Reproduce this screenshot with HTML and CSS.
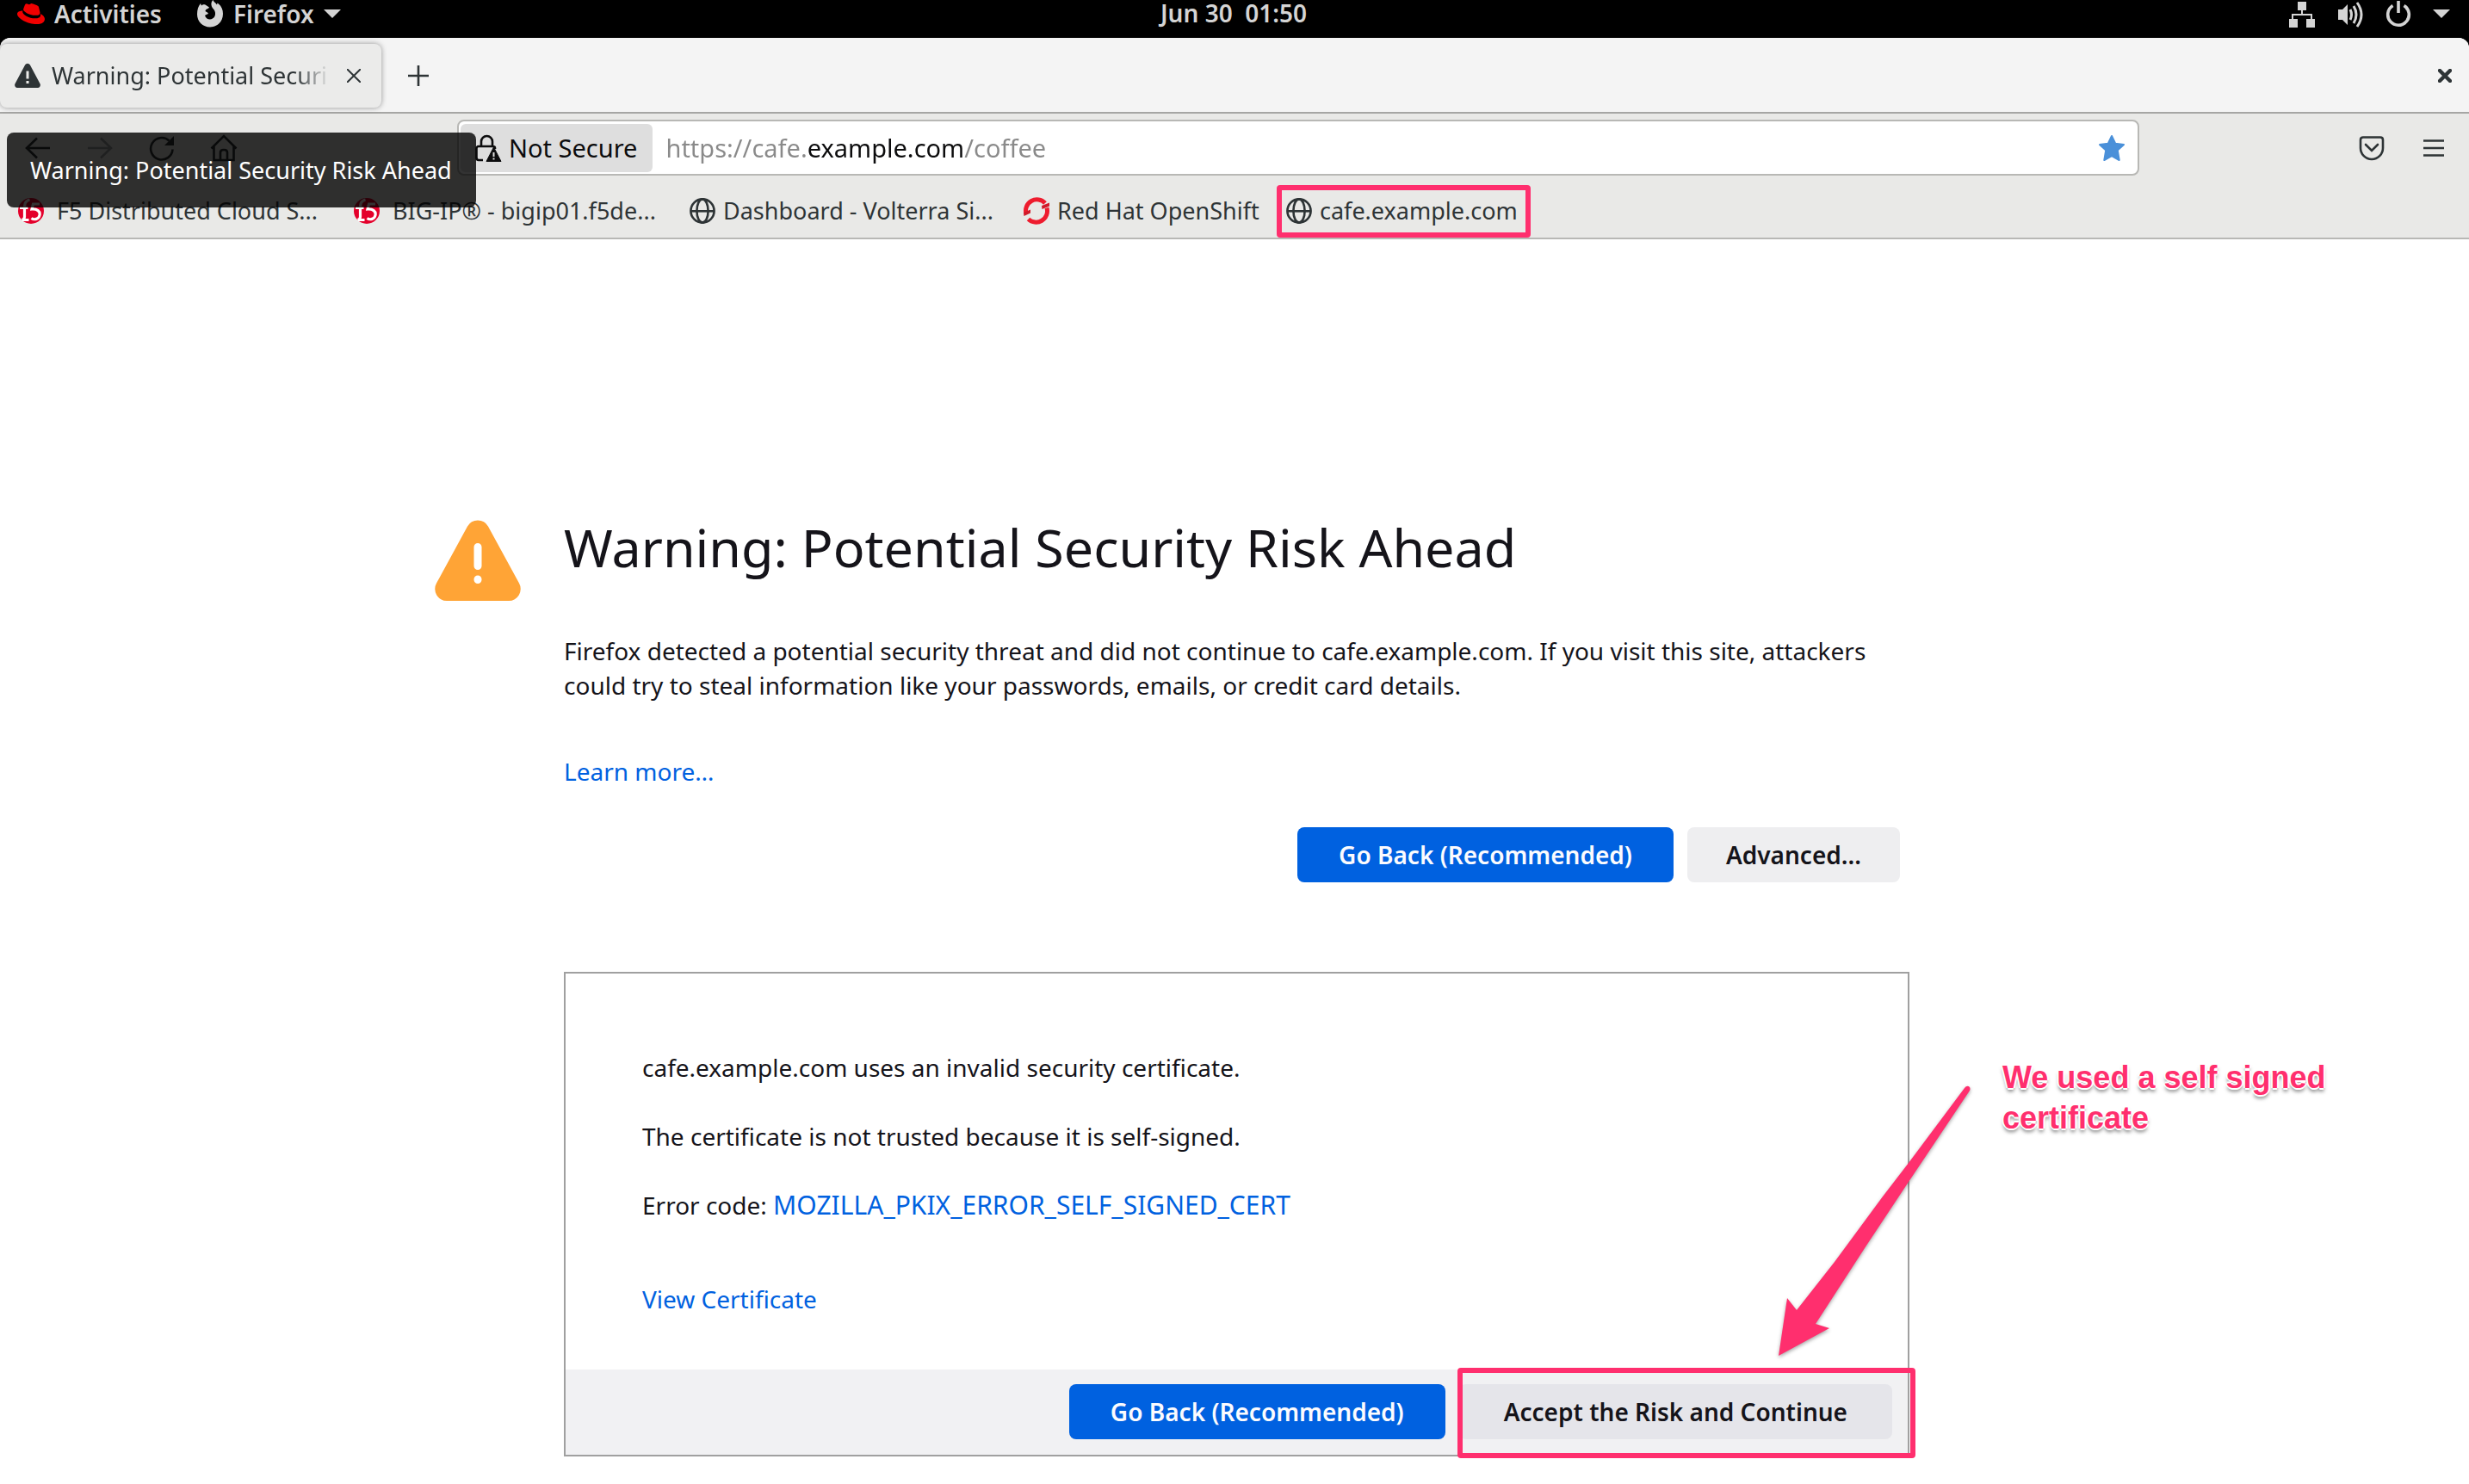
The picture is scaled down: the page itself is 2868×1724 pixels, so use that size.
FILE: index.html
```
<!DOCTYPE html>
<html lang="en">
<head>
<meta charset="utf-8">
<meta name="viewport" content="width=device-width, initial-scale=1">
<title>Warning: Potential Security Risk Ahead</title>
<link rel="stylesheet" href="styles.css">
</head>
<body>
<svg class="sprite" aria-hidden="true">
  <symbol id="globe" viewBox="0 0 32 32"><g fill="none" stroke="currentColor" stroke-width="2.6"><circle cx="16" cy="16" r="13.6"/><ellipse cx="16" cy="16" rx="6.6" ry="13.6"/><path d="M2.5 16.3h27"/></g></symbol>
  <symbol id="f5" viewBox="0 0 32 32" preserveAspectRatio="xMinYMid meet"><circle cx="16" cy="16" r="15" fill="#e4002b"/><path d="M14.500 3C8.500 4.500 8.500 9 8.500 14v9c0 2-1 3-3 3.500M3 12.500h9.500M13.500 26.500h-8M26 8h-7.500l-1.500 6c6-.5 10 2.500 9 7s-6 6-9.500 3.500" fill="none" stroke="#fff" stroke-width="3.200"/></symbol>
  <symbol id="arrow-down" viewBox="0 0 20 10"><path d="M0 0h20L10 10z" fill="currentColor"/></symbol>
</svg>

<header class="system-bar">
  <div class="system-side">
    <button class="system-item" type="button">
      <svg class="icon-32" viewBox="0 0 24 24"><path fill="#f00000" d="M16.009 13.386c1.577 0 3.86-.326 3.86-2.202a1.765 1.765 0 0 0-.04-.431l-.94-4.08c-.216-.898-.406-1.305-1.982-2.093-1.223-.625-3.888-1.658-4.676-1.658-.733 0-.947.946-1.822.946-.842 0-1.467-.706-2.255-.706-.757 0-1.25.515-1.63 1.576 0 0-1.06 2.99-1.197 3.424a.81.81 0 0 0-.028.245c0 1.162 4.577 4.974 10.71 4.974m4.101-1.435c.218 1.032.218 1.14.218 1.277 0 1.765-1.984 2.745-4.593 2.745-5.895.004-11.06-3.451-11.06-5.734a2.326 2.326 0 0 1 .19-.925C2.746 9.415 0 9.794 0 12.217c0 3.969 9.405 8.861 16.851 8.861 5.71 0 7.149-2.582 7.149-4.62 0-1.605-1.387-3.425-3.887-4.512"/></svg>
      Activities
    </button>
    <button class="system-item" type="button">
      <svg class="icon-32" viewBox="0 0 32 32"><path fill="currentColor" d="M19.500 0c.5 2 3 3.500 4.500 5.500l.5-2c4 2.500 6.500 7 6.500 12.500 0 9-6.500 15.500-15 15.500S1 25 1 16.500C1 11 2.500 7 5 4l1 2.500C7.500 5 9 5 10.500 5.500L15 8.500c-1 2-4 1.500-4.500 4.500 1.500 1.500 3 1 3.500 3-2 1-3 1-4 2 1.500 4.500 6 5.500 9 3.500 4-2.500 4-8 .5-11.500-2.500-3-3-7 0-10z"/></svg>
      Firefox
      <svg class="caret" aria-hidden="true"><use href="#arrow-down"/></svg>
    </button>
  </div>
  <time class="clock">Jun 30&nbsp; 01:50</time>
  <div class="system-side system-status">
    <svg class="icon-32" viewBox="0 0 32 32" role="img" aria-label="Network"><path fill="currentColor" d="M11 2h10v10h-4v4h11v6h3v10H21V22h5v-4H6v4h5v10H1V22h3v-6h11v-4h-4z"/></svg>
    <svg class="icon-32" viewBox="0 0 32 32" role="img" aria-label="Volume"><path fill="currentColor" d="M2 11h5l6-6v24l-6-6H2z"/><path fill="none" stroke="currentColor" stroke-width="3" d="M16 11q3 6 0 12M20 7q6 10 0 20M24 3q10 14 0 28"/></svg>
    <svg class="icon-32" viewBox="0 0 32 32" role="img" aria-label="Power"><path fill="none" stroke="currentColor" stroke-width="3.600" d="M9.500 6.500a12.300 12.300 0 1 0 13 0M16 1v14"/></svg>
    <svg class="caret" aria-hidden="true"><use href="#arrow-down"/></svg>
  </div>
</header>

<div class="browser">
  <div class="tab-bar">
    <div class="tab">
      <svg class="icon-32" viewBox="0 0 32 32"><path fill="#2e3436" d="M13.200 3.300a3.200 3.200 0 0 1 5.600 0l11.700 22A3.200 3.200 0 0 1 27.700 30H4.300a3.200 3.200 0 0 1-2.800-4.700z"/><path stroke="#ebebea" stroke-width="3" d="M16 10.500v9M16 22v3"/></svg>
      <span class="tab-title">Warning: Potential Securi</span>
      <button class="icon-button" type="button" aria-label="Close tab"><svg class="icon-16" viewBox="0 0 16 16"><path d="m0 0 16 16M16 0 0 16" stroke="currentColor" stroke-width="2"/></svg></button>
    </div>
    <button class="icon-button new-tab" type="button" aria-label="New tab"><svg class="icon-24" viewBox="0 0 24 24"><path d="M12 0v24M0 12h24" stroke="currentColor" stroke-width="2.600"/></svg></button>
    <button class="icon-button window-close" type="button" aria-label="Close window"><svg class="icon-16" viewBox="0 0 16 16"><path d="m2 2 12 12M14 2 2 14" stroke="currentColor" stroke-width="4.400" stroke-linecap="round"/></svg></button>
  </div>

  <div class="toolbar">
    <nav class="nav-row" aria-label="Navigation">
      <div class="nav-buttons">
        <button class="icon-button" type="button" aria-label="Back"><svg class="icon-32" viewBox="0 0 32 32"><path d="M30 16H3M15 4.500 3 16l12 11.500" fill="none" stroke="currentColor" stroke-width="2.600"/></svg></button>
        <button class="icon-button" type="button" aria-label="Forward" disabled><svg class="icon-32" viewBox="0 0 32 32"><path d="M2 16h27M17 4.500 29 16 17 27.500" fill="none" stroke="currentColor" stroke-width="2.600"/></svg></button>
        <button class="icon-button" type="button" aria-label="Reload"><svg class="icon-32" viewBox="0 0 32 32"><path d="M28.500 17.500A12.700 12.700 0 1 1 24.500 7.500" fill="none" stroke="currentColor" stroke-width="2.600"/><path d="M30 2v11H19z" fill="currentColor"/></svg></button>
        <button class="icon-button" type="button" aria-label="Home"><svg class="icon-32" viewBox="0 0 32 32"><path d="M1.500 16.500 16 2l14.500 14.500M4.500 14v16h23V14M12 30v-9q0-3 4-3t4 3v9" fill="none" stroke="currentColor" stroke-width="2.600"/></svg></button>
      </div>
      <div class="url-bar">
        <button class="identity" type="button">
          <svg class="icon-32" viewBox="0 0 32 32"><path d="M8 14V8.500a6.500 6.500 0 0 1 13 0V14M24 17v-1q0-2-3-2H5q-2.500 0-2.500 3v10q0 3 2.500 3h5" fill="none" stroke="currentColor" stroke-width="2.600"/><path d="m22.500 15 8.500 16.500H14z" fill="currentColor" stroke="currentColor" stroke-linejoin="round"/><path d="M22.500 21v5M22.500 27.500v2" stroke="#dedede" stroke-width="2"/></svg>
          Not Secure
        </button>
        <input class="url-input" type="text" aria-label="Address" value="https://cafe.example.com/coffee">
        <button class="icon-button star" type="button" aria-label="Edit bookmark"><svg class="icon-32" viewBox="0 0 32 32"><path fill="currentColor" stroke="currentColor" stroke-width="2" stroke-linejoin="round" d="m16 2 4.200 8.800 9.800 1.300-7.200 6.500 1.900 11.400L16 25.200 7.300 30l1.900-11.400L2 12.100l9.800-1.300z"/></svg></button>
      </div>
      <div class="menu-buttons">
        <button class="icon-button" type="button" aria-label="Save to Pocket"><svg class="icon-32" viewBox="0 0 32 32"><path d="M6 3.500h20q3 0 3 3V16a13 13 0 0 1-26 0V6.500q0-3 3-3zM9 12l7 7 7-7" fill="none" stroke="currentColor" stroke-width="2.600" stroke-linecap="round"/></svg></button>
        <button class="icon-button" type="button" aria-label="Menu"><svg class="icon-24" viewBox="0 0 24 24"><path d="M0 3.500h24M0 12h24M0 20.500h24" stroke="currentColor" stroke-width="2.600"/></svg></button>
      </div>
    </nav>
    <nav class="bookmarks" aria-label="Bookmarks">
      <a class="bookmark wide" href="#"><svg class="favicon-f5"><use href="#f5"/></svg>F5 Distributed Cloud S...</a>
      <a class="bookmark wide" href="#"><svg class="favicon-f5"><use href="#f5"/></svg>BIG-IP® - bigip01.f5de...</a>
      <a class="bookmark wide" href="#"><svg class="icon-32"><use href="#globe"/></svg>Dashboard - Volterra Si...</a>
      <a class="bookmark medium" href="#"><svg class="icon-32" viewBox="0 0 32 32"><path d="M4 19.500A13 13 0 0 1 26 7M28 12.500A13 13 0 0 1 6.500 25.500" fill="none" stroke="#ee1c2e" stroke-width="5"/><path d="m22 10 9-3.500v4L22.500 14zM1 18l8-3.500v4L1.500 22z" fill="#d11a2a"/></svg>Red Hat OpenShift</a>
      <a class="bookmark marked" href="#"><svg class="icon-32"><use href="#globe"/></svg>cafe.example.com</a>
    </nav>
    <div class="tooltip" role="tooltip">Warning: Potential Security Risk Ahead</div>
  </div>

  <main class="page">
    <svg class="warning-icon" viewBox="0 0 100 94" role="img" aria-label="Warning"><path fill="#ffa436" d="M38 7.500a13.800 13.800 0 0 1 24 0l36 66A13.800 13.800 0 0 1 86 94H14A13.800 13.800 0 0 1 2 73.500z"/><path d="M50 31.500v22M50 69v.5" stroke="#fff" stroke-width="9" stroke-linecap="round"/></svg>
    <div class="content">
      <h1>Warning: Potential Security Risk Ahead</h1>
      <p class="intro">Firefox detected a potential security threat and did not continue to cafe.example.com. If you visit this site, attackers could try to steal information like your passwords, emails, or credit card details.</p>
      <p class="learn-more"><a href="#">Learn more…</a></p>
      <div class="actions">
        <button class="button primary" type="button">Go Back (Recommended)</button>
        <button class="button" type="button">Advanced...</button>
      </div>
      <section class="details">
        <div class="details-body">
          <p>cafe.example.com uses an invalid security certificate.</p>
          <p>The certificate is not trusted because it is self-signed.</p>
          <p>Error code: <a class="error-code" href="#">MOZILLA_PKIX_ERROR_SELF_SIGNED_CERT</a></p>
          <p class="view-certificate"><a href="#">View Certificate</a></p>
        </div>
        <div class="details-footer">
          <button class="button primary" type="button">Go Back (Recommended)</button>
          <button class="button accept" type="button">Accept the Risk and Continue</button>
        </div>
        <svg class="arrow" viewBox="2060 1258 232 322" aria-hidden="true"><path fill="#ff2f6e" d="M2282 1265q3-4 6-1 1 2 0 4L2217 1374 2166 1451 2109 1539 2125 1544 2066 1576 2076 1509 2087 1523 2131 1467 2187 1391 2217 1352z"/></svg>
        <p class="note">We used a self signed<br>certificate</p>
      </section>
    </div>
  </main>
</div>
</body>
</html>
```
FILE: styles.css
```
* { box-sizing: border-box; }

body {
  margin: 0;
  background: #000;
  color: #15141a;
  font: 28px/40px "Noto Sans", sans-serif;
}

button { font: inherit; color: inherit; border: 0; padding: 0; background: none; }
svg { display: block; flex: none; }
p, h1 { margin: 0; }
a { color: #0061e0; text-decoration: none; }

.sprite { position: absolute; width: 0; height: 0; }
.icon-16 { width: 16px; height: 16px; }
.icon-24 { width: 24px; height: 24px; }
.icon-32 { width: 32px; height: 32px; }
.caret { width: 20px; height: 10px; }
.icon-button { display: flex; align-items: center; justify-content: center; flex: none; width: 32px; height: 32px; }

/* Desktop panel */
.system-bar {
  display: grid;
  grid-template-columns: 1fr auto 1fr;
  height: 44px;
  padding: 0 22px 12px 20px;
  color: #d4d4d4;
  font-weight: 600;
  line-height: 32px;
}
.system-side { display: flex; align-items: center; gap: 40px; }
.system-item { display: flex; align-items: center; gap: 11px; line-height: 32px; }
.system-status { justify-content: flex-end; gap: 24px; }
.clock { line-height: 30px; }

/* Browser window */
.browser { background: #fff; border-radius: 12px 12px 0 0; }
.tab-bar {
  display: flex;
  align-items: center;
  height: 88px;
  padding: 2px 12px 0 0;
  background: #f4f4f4;
  border-bottom: 2px solid #a6a6a4;
  border-radius: 12px 12px 0 0;
  color: #2e3436;
  font-size: 27px;
}
.tab {
  display: flex;
  align-items: center;
  gap: 12px;
  width: 443px;
  height: 74px;
  padding: 0 16px;
  background: #ebebea;
  border-radius: 8px;
  box-shadow: 0 0 6px rgba(0, 0, 0, 0.4);
}
.tab-title {
  flex: 1;
  white-space: nowrap;
  mask-image: linear-gradient(to left, transparent, #000 40px);
}
.new-tab { margin-left: 27px; }
.window-close { margin-left: auto; }

.toolbar {
  position: relative;
  background: #e9e9e7;
  border-bottom: 2px solid #b8b8b5;
  color: #2e3436;
}
.nav-row { display: flex; padding-top: 7px; }
.nav-buttons { display: flex; align-items: center; gap: 40px; width: 531px; padding-left: 28px; }
.nav-buttons [disabled] { opacity: 0.4; }
.url-bar {
  display: flex;
  align-items: center;
  flex: 1;
  height: 65px;
  padding: 0 14px 0 2px;
  background: #fff;
  border: 2px solid #b8b8b5;
  border-radius: 8px;
  font-size: 29px;
}
.identity {
  display: flex;
  align-items: center;
  gap: 8px;
  height: 56px;
  padding: 0 18px 0 16px;
  background: #dedede;
  border-radius: 6px;
  color: #0c0c0d;
}
/* The host name stands out from the rest of the address */
.url-input {
  flex: 1;
  min-width: 0;
  height: 56px;
  padding: 0;
  margin-left: 15px;
  border: 0;
  outline: 0;
  font: inherit;
  color: transparent;
  background: linear-gradient(to right, #8a8a8a 164px, #0c0c0d 164px 347px, #8a8a8a 347px);
  background-clip: text;
}
.star { color: #4a90d9; }
.menu-buttons { display: flex; align-items: center; gap: 40px; width: 383px; justify-content: flex-end; padding-right: 25px; }

.bookmarks { display: flex; padding: 11px 6px 0; font-size: 27px; }
.bookmark { display: flex; align-items: center; gap: 8px; height: 61px; padding: 0 12px 2px; color: #2e3436; white-space: nowrap; }
.bookmark.wide { flex: 0 1 390px; min-width: 0; padding: 0 14px 2px; overflow: hidden; }
.bookmark.medium { flex: 0 1 307px; min-width: 0; }
.bookmark.marked { padding: 0 9px 2px 4px; border: 6px solid #ff2f6e; border-radius: 4px; }
.favicon-f5 { width: 38px; height: 32px; }

.tooltip {
  position: absolute;
  top: 22px;
  left: 8px;
  padding: 24px 28px 23px 27px;
  background: rgba(0, 0, 0, 0.8);
  border-radius: 8px;
  color: #fff;
  font-size: 27px;
}

/* Error page */
.page {
  display: grid;
  grid-template-columns: minmax(0, 655fr) minmax(0, 1563fr) minmax(0, 650fr);
  padding: 322px 0 32px;
}
.warning-icon { width: 100px; height: 94px; margin: 4px 50px 0 0; justify-self: end; }
h1 { font-size: 61px; font-weight: 400; line-height: 72px; }
.intro { margin-top: 64px; }
.learn-more { margin-top: 60px; }
.actions { display: flex; justify-content: flex-end; gap: 16px; margin-top: 45px; padding-right: 11px; }
.button { height: 64px; padding: 0 45px; background: #eeeef0; border-radius: 8px; font-weight: 600; }
.button.primary { padding: 0 48px; background: #0061e0; color: #fbfbfe; }

.details { position: relative; margin-top: 104px; border: 2px solid #a0a0a0; }
.details-body { display: grid; gap: 40px; padding: 89px 89px 62px; }
.error-code { font-size: 30px; }
.view-certificate { margin-top: 29px; }
.details-footer { display: flex; justify-content: flex-end; gap: 16px; padding: 17px 18px 18px; background: #f1f1f3; }
.button.accept { position: relative; padding: 0 52px; background: #e5e5ea; }
.accept::after {
  content: "";
  position: absolute;
  inset: -19px -27px -22px -2px;
  border: 6px solid #ff2f6e;
  border-radius: 4px;
}
.arrow { position: absolute; top: 126px; right: -76px; width: 232px; height: 322px; filter: drop-shadow(0 2px 2px rgba(0, 0, 0, 0.35)); }
.note {
  position: absolute;
  top: 97px;
  left: calc(100% + 110px);
  color: #ff2f6e;
  font: bold 36px/47px "Liberation Sans", sans-serif;
  white-space: nowrap;
  text-shadow: 2px 0 #fff, -2px 0 #fff, 0 2px #fff, 0 -2px #fff, 0 4px 4px rgba(0, 0, 0, 0.5);
}
```
